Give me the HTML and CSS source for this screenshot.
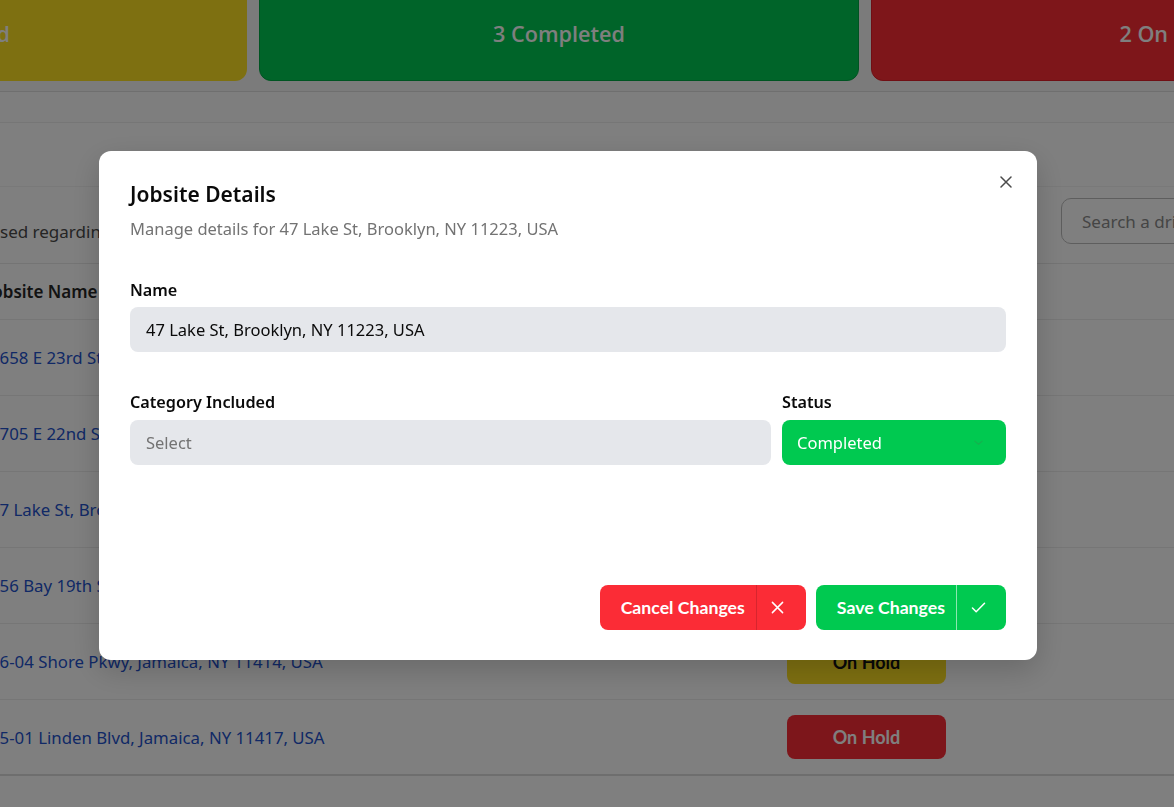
FILE: index.html
```html
<!DOCTYPE html>
<html lang="en">
<head>
<meta charset="utf-8">
<title>Jobsites</title>
<link rel="stylesheet" href="styles.css">
</head>
<body>
<div class="page">
  <section class="summary">
    <div class="cards">
      <div class="card card-yellow">1 Scheduled</div>
      <div class="card card-green">3 Completed</div>
      <div class="card card-red">2 On Hold</div>
    </div>
  </section>
  <div class="band"></div>
  <section class="panel">
    <div class="panel-head">
      <p class="panel-desc">Jobsites discussed regarding the current projects</p>
      <div class="search">Search a driver</div>
    </div>
    <div class="table">
      <div class="row head">
        <div class="cell">Jobsite Name</div>
        <div class="cell">Status</div>
      </div>
      <div class="row">
        <a class="cell link">2658 E 23rd St, Brooklyn, NY 11229, USA</a>
        <div class="cell"><span class="badge badge-green">Completed</span></div>
      </div>
      <div class="row">
        <a class="cell link">1705 E 22nd St, Brooklyn, NY 11229, USA</a>
        <div class="cell"><span class="badge badge-yellow">Scheduled</span></div>
      </div>
      <div class="row">
        <a class="cell link">47 Lake St, Brooklyn, NY 11223, USA</a>
        <div class="cell"><span class="badge badge-green">Completed</span></div>
      </div>
      <div class="row">
        <a class="cell link">156 Bay 19th St, Brooklyn, NY 11214, USA</a>
        <div class="cell"><span class="badge badge-green">Completed</span></div>
      </div>
      <div class="row">
        <a class="cell link">16-04 Shore Pkwy, Jamaica, NY 11414, USA</a>
        <div class="cell"><span class="badge badge-yellow">On Hold</span></div>
      </div>
      <div class="row">
        <a class="cell link">15-01 Linden Blvd, Jamaica, NY 11417, USA</a>
        <div class="cell"><span class="badge badge-red">On Hold</span></div>
      </div>
    </div>
  </section>
</div>

<div class="overlay">
  <div class="modal" role="dialog">
    <button class="close" aria-label="Close">
      <svg viewBox="0 0 12 12" width="12" height="12"><path d="M1 1L11 11M11 1L1 11" stroke="currentColor" stroke-width="1.5" stroke-linecap="round" fill="none"/></svg>
    </button>
    <h2 class="modal-title">Jobsite Details</h2>
    <p class="modal-sub">Manage details for 47 Lake St, Brooklyn, NY 11223, USA</p>

    <div class="field">
      <label class="label">Name</label>
      <div class="input">47 Lake St, Brooklyn, NY 11223, USA</div>
    </div>

    <div class="field-row">
      <div class="field grow">
        <label class="label">Category Included</label>
        <div class="input placeholder">Select</div>
      </div>
      <div class="field status">
        <label class="label">Status</label>
        <div class="input select-green">
          <span>Completed</span>
          <svg class="chev" viewBox="0 0 12 12" width="11" height="11"><path d="M2 4.5L6 8L10 4.5" stroke="currentColor" stroke-width="1.4" fill="none" stroke-linecap="round" stroke-linejoin="round"/></svg>
        </div>
      </div>
    </div>

    <div class="footer">
      <button class="btn btn-red">
        <span class="btn-text">Cancel Changes</span>
        <span class="btn-icon x">
          <svg viewBox="0 0 14 14" width="13" height="13"><path d="M1.5 1.5L12.5 12.5M12.5 1.5L1.5 12.5" stroke="currentColor" stroke-width="1.6" stroke-linecap="round" fill="none"/></svg>
        </span>
      </button>
      <button class="btn btn-green">
        <span class="btn-text">Save Changes</span>
        <span class="btn-icon check">
          <svg viewBox="0 0 16 14" width="15" height="13"><path d="M1.5 7.5L5.5 11.5L14.5 2.5" stroke="currentColor" stroke-width="1.6" stroke-linecap="round" stroke-linejoin="round" fill="none"/></svg>
        </span>
      </button>
    </div>
  </div>
</div>
</body>
</html>
```

FILE: styles.css
```css
* { box-sizing: border-box; }

html, body {
  margin: 0;
  padding: 0;
  background: #ffffff;
  overflow: hidden;
  height: 100%;
}

body {
  font-family: "Noto Sans", "Open Sans", sans-serif;
  color: #171717;
}

.page {
  width: 1174px;
  height: 807px;
  overflow: hidden;
}

/* summary cards */
.summary {
  margin-top: -15px;
  background: #f7f7f7;
  padding-bottom: 10px;
  border-bottom: 1px solid #dedede;
  box-shadow: 0 3px 4px rgba(0,0,0,0.06);
}

.cards {
  display: flex;
  gap: 12px;
  margin-left: -353px;
}

.card {
  flex: 0 0 600px;
  height: 96px;
  border-radius: 12px;
  display: flex;
  align-items: center;
  justify-content: center;
  padding-top: 1px;
  font-family: "Open Sans", sans-serif;
  font-size: 21.6px;
  font-weight: 600;
  color: #ffffff;
}

.card-yellow { background: #fde022; }
.card-green { background: #00c852; border: 1px solid #00a844; }
.card-red { background: #fc2c34; border: 1px solid #e01e28; }

.band {
  height: 31px;
  border-bottom: 1px solid #ececec;
  background: #fcfcfc;
}

/* panel */
.panel {
  margin-top: 63px;
  border-top: 1px solid #f2f2f2;
}

.panel-head {
  display: flex;
  justify-content: space-between;
  align-items: flex-start;
  height: 77px;
  border-bottom: 1px solid #e8e8e8;
  margin-left: -116px;
}

.panel-desc {
  margin: 33px 0 0;
  font-size: 17px;
  color: #4a4a4a;
  white-space: nowrap;
}

.search {
  margin-top: 11px;
  width: 200px;
  flex: 0 0 200px;
  height: 46px;
  border: 1px solid #bdbdbd;
  border-radius: 10px;
  padding: 0 20px;
  display: flex;
  align-items: center;
  font-size: 17px;
  color: #8a8a8a;
  margin-right: -87px;
  white-space: nowrap;
}

.row {
  display: grid;
  grid-template-columns: 797px 160px 1fr;
  align-items: center;
  height: 76px;
  border-bottom: 1px solid #ececec;
  margin-left: -10px;
}

.row.head {
  height: 56px;
  font-weight: 600;
  font-size: 17px;
  color: #262626;
  margin-left: -13px;
  grid-template-columns: 800px 160px 1fr;
}

.row:last-child {
  border-bottom: 2px solid #dcdcdc;
}

.link {
  font-size: 16.8px;
  color: #2352cc;
  text-decoration: none;
  white-space: nowrap;
}

.badge {
  display: flex;
  align-items: center;
  justify-content: center;
  width: 159px;
  height: 44px;
  border-radius: 8px;
  font-family: "Lato", sans-serif;
  font-weight: 700;
  font-size: 18px;
  color: #ffffff;
}

.badge-green { background: #00c950; }
.badge-yellow { background: #fde022; color: #111111; }
.badge-red { background: #fb2c36; }

/* modal */
.overlay {
  position: fixed;
  inset: 0;
  background: rgba(0, 0, 0, 0.5);
  display: flex;
  align-items: flex-start;
  justify-content: flex-start;
  padding: 151px 0 0 99px;
}

.modal {
  position: relative;
  width: 938px;
  height: 509px;
  background: #ffffff;
  border-radius: 12px;
  padding: 29px 31px 30px 31px;
  display: flex;
  flex-direction: column;
  box-shadow: 0 10px 30px rgba(0,0,0,0.18);
}

.close {
  position: absolute;
  top: 25px;
  right: 25px;
  width: 12px;
  height: 12px;
  padding: 0;
  border: 0;
  background: none;
  color: #4b4b4b;
  display: flex;
  cursor: pointer;
}

.modal-title {
  margin: 0;
  font-size: 21px;
  line-height: 28px;
  font-weight: 600;
  color: #0a0a0a;
}

.modal-sub {
  margin: 9px 0 0;
  font-size: 16.5px;
  line-height: 24px;
  color: #737373;
}

.field {
  display: flex;
  flex-direction: column;
}

.modal-sub + .field { margin-top: 37px; }

.label {
  font-size: 16.2px;
  line-height: 24px;
  font-weight: 600;
  color: #0a0a0a;
  margin-bottom: 5px;
}

.input {
  height: 45px;
  border-radius: 8px;
  background: #e5e7eb;
  padding: 0 16px;
  display: flex;
  align-items: center;
  font-size: 16.5px;
  color: #0a0a0a;
}

.input.placeholder { color: #737373; }

.field-row {
  display: flex;
  gap: 11px;
  margin-top: 38px;
}

.field-row .label { margin-bottom: 6px; }

.grow { flex: 1; }

.status { width: 224px; }

.select-green {
  background: #00c950;
  color: #ffffff;
  justify-content: space-between;
  padding: 0 22px 0 15px;
}

.chev { color: #14b24f; }

.footer {
  margin-top: auto;
  display: flex;
  justify-content: flex-end;
  gap: 10px;
}

.btn {
  display: flex;
  align-items: stretch;
  height: 45px;
  border: 0;
  padding: 0;
  border-radius: 8px;
  color: #ffffff;
  font-family: "Lato", sans-serif;
  font-weight: 700;
  font-size: 17.7px;
  cursor: pointer;
}

.btn-red { background: #fb2c36; }
.btn-green { background: #00c950; }

.btn-text {
  display: flex;
  align-items: center;
  padding: 0 11px 0 21px;
}

.btn-icon {
  display: flex;
  align-items: center;
  border-left: 1px solid rgba(0, 0, 0, 0.14);
}

.btn-icon.x { padding: 0 22px 0 14px; }

.btn-icon.check {
  padding: 0 20px 0 14px;
  border-left-color: rgba(255, 255, 255, 0.55);
}
```
